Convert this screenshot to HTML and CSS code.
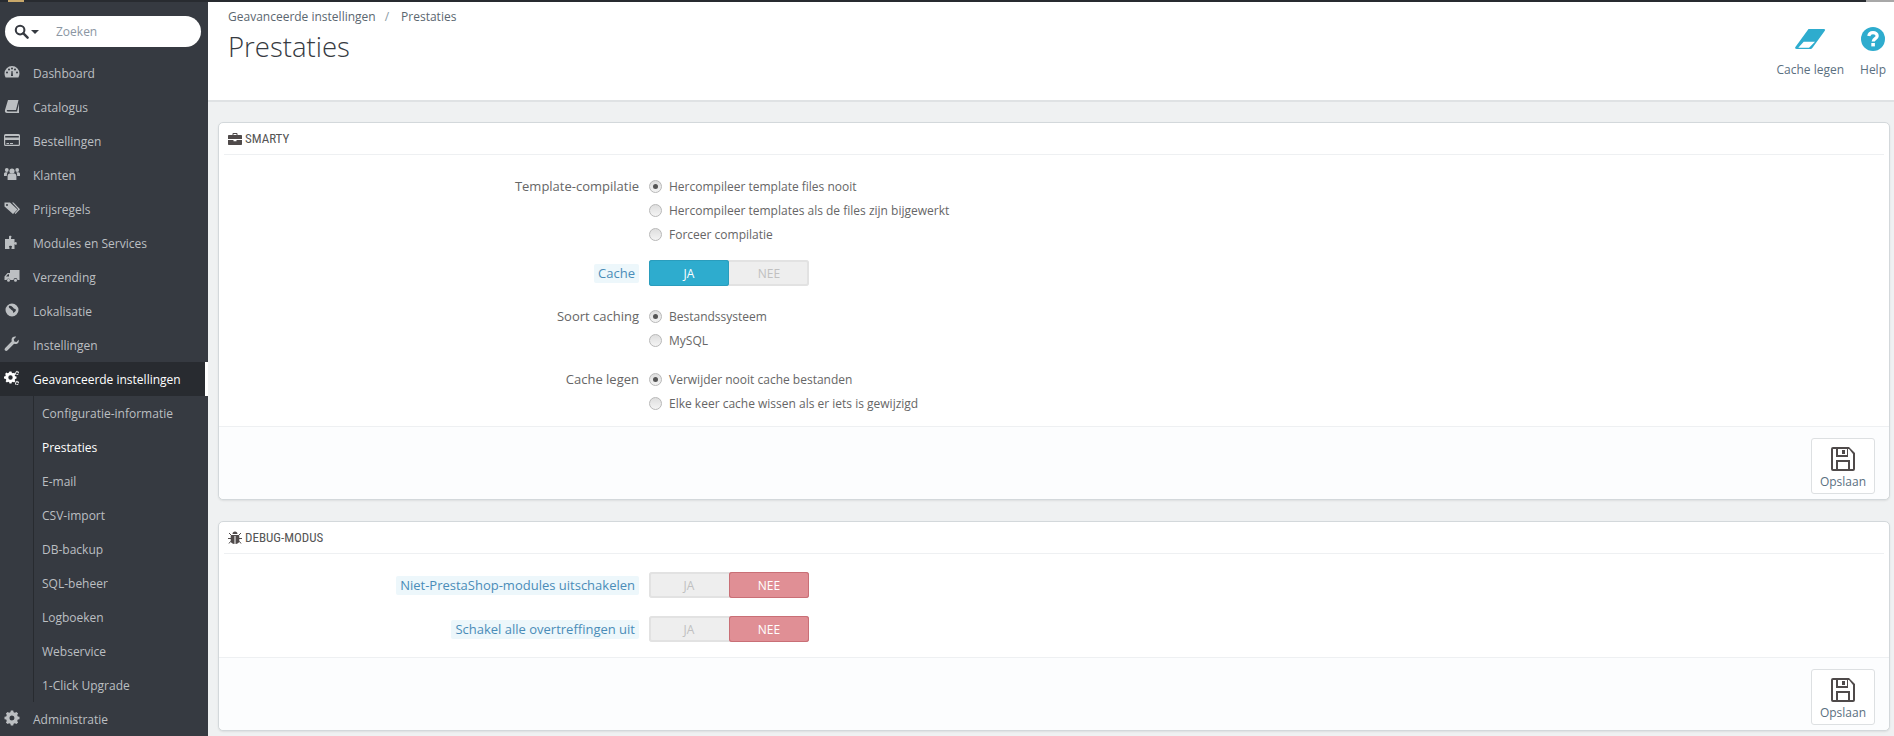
FILE: index.html
```html
<!DOCTYPE html>
<html lang="nl">
<head>
<meta charset="utf-8">
<title>Prestaties</title>
<link rel="stylesheet" href="styles.css">
</head>
<body>
<svg class="defs" width="0" height="0" aria-hidden="true">
  <symbol id="i-disk" viewBox="0 0 24 24"><path fill="#4f4a4a" fill-rule="evenodd" d="M2 0h16l6 6v16a2 2 0 0 1-2 2H2a2 2 0 0 1-2-2V2a2 2 0 0 1 2-2zm5 2v6h9V2zm4 1h3v4h-3zM2 2v20h3v-9h14v9h3V7l-4-5h-1v8H5V2zm5 13v7h10v-7z"/></symbol>
</svg>
<div class="topbar"><span class="logo-tip"></span><span class="grow"></span><span class="scroll-tip"></span></div>
<div class="layout">
  <nav class="sidebar">
    <div class="search">
      <svg class="search-icon" viewBox="0 0 16 16"><circle cx="6.5" cy="6.5" r="4.6" fill="none" stroke="#363a41" stroke-width="2.2"/><path d="M10 10l4.500 4.500" stroke="#363a41" stroke-width="2.6" stroke-linecap="round"/></svg>
      <span class="caret"></span>
      <span class="search-text">Zoeken</span>
    </div>
    <ul class="menu">
      <li class="item"><svg class="ico" viewBox="0 0 16 16"><path fill-rule="evenodd" d="M8 2a7.500 7.500 0 0 0-7.500 7.500c0 1.500.4 2.800 1.100 4h12.800c.7-1.200 1.100-2.500 1.100-4A7.500 7.500 0 0 0 8 2zM3 9.500a1 1 0 1 1 0-2 1 1 0 0 1 0 2zm2-3a1 1 0 1 1 0-2 1 1 0 0 1 0 2zm3-1a1 1 0 1 1 0-2 1 1 0 0 1 0 2zm3 1a1 1 0 1 1 0-2 1 1 0 0 1 0 2zm2 3a1 1 0 1 1 0-2 1 1 0 0 1 0 2zM7 12l.5-5h1l.5 5z"/></svg>Dashboard</li>
      <li class="item"><svg class="ico" viewBox="0 0 16 16"><path d="M4 2h10.500l-2.500 10H3.500c-.6 0-1 .7-.6 1.100.2.300.5.400.8.400h9.300l2-8v9.500H3c-1.500 0-2.500-1.200-2-3z"/></svg>Catalogus</li>
      <li class="item"><svg class="ico" viewBox="0 0 16 16"><path fill-rule="evenodd" d="M1.500 2h13A1.500 1.500 0 0 1 16 3.500v9a1.500 1.500 0 0 1-1.500 1.500h-13A1.500 1.500 0 0 1 0 12.500v-9A1.500 1.500 0 0 1 1.500 2zM1.200 4v1.500h13.600V4zm0 4v4.800h13.600V8zM2.500 11h2.500v1H2.500zm3.500 0h3v1H6z"/></svg>Bestellingen</li>
      <li class="item"><svg class="ico" viewBox="0 0 16 16"><circle cx="8" cy="5" r="2.600"/><circle cx="2.800" cy="4" r="1.900"/><circle cx="13.200" cy="4" r="1.900"/><path d="M3.600 14V10c0-1.500 1-2.500 2-2.500h4.800c1 0 2 1 2 2.500v4zM0 10V8c0-1 .7-1.800 1.500-1.800h2.200C3 7.200 2.800 8.500 2.800 10zm16 0V8c0-1-.7-1.800-1.500-1.800h-2.200c.7 1 .9 2.300.9 3.800z"/></svg>Klanten</li>
      <li class="item"><svg class="ico" viewBox="0 0 16 16"><path fill-rule="evenodd" d="M.5 2.500h5.500l7.500 7-4.500 4.500-8.500-7.500zM3 4a1 1 0 1 0 0 2 1 1 0 0 0 0-2z"/><path d="M8 2.500h1.500l6.500 6.800-4.500 4.700-.8-.7 3.500-4z"/></svg>Prijsregels</li>
      <li class="item"><svg class="ico" viewBox="0 0 16 16"><path d="M5 2.500c0-1 2.500-1 2.500 0 0 .8-.5 1-.5 1.500v1h3.500v3.500c.5 0 .8-.6 1.500-.6 1 0 1 3 0 3-.7 0-1-.6-1.500-.6V15H7.500v-1c0-.6.500-.8.500-1.500 0-1-3-1-3 0 0 .7.500.9.500 1.500v1H1V5h4V4c0-.5 0-.8 0-1.500z"/></svg>Modules en Services</li>
      <li class="item"><svg class="ico" viewBox="0 0 16 16"><path fill-rule="evenodd" d="M6 2h9.500v10h-2a2 2 0 0 0-4 0H6.400a2 2 0 0 0-3.900 0H.5V8.500L3.500 5H6zM4 6.200L2 8.500h3V6.200zM4.500 10.700a1.500 1.500 0 1 1 0 3 1.500 1.500 0 0 1 0-3zm7 0a1.500 1.500 0 1 1 0 3 1.500 1.500 0 0 1 0-3z"/></svg>Verzending</li>
      <li class="item"><svg class="ico" viewBox="0 0 16 16"><path fill-rule="evenodd" d="M8 1.500a6.500 6.500 0 1 1 0 13 6.500 6.500 0 0 1 0-13zM5 4c-.5 1 0 2 1 2.500s1 1.500 2 1.800c1 .3 1 1.500 1.300 2.700 1.500-.7 2.700-2 2.700-3.500-1-.2-1.300-1-2-1s-.5-1-1.500-1.500C7.500 4 6 3.500 5 4z"/></svg>Lokalisatie</li>
      <li class="item"><svg class="ico" viewBox="0 0 16 16"><path d="M14.800 3.500l-2.300 2.400-2.200-.5-.5-2.200L12.200.8C10.500.2 8.300 1 7.700 2.700c-.3.900-.2 1.800.1 2.600L1.200 11.900c-.8.900-.8 1.900-.1 2.500.7.700 1.700.6 2.500-.1l6.500-6.600c1.800.7 3.800 0 4.500-1.800.3-.8.300-1.700 0-2.400z"/></svg>Instellingen</li>
      <li class="item item-active"><svg class="ico" viewBox="0 0 16 16"><path fill-rule="evenodd" d="M5.500 3h2l.3 1.300 1.100.5 1.200-.6 1.300 1.300-.7 1.200.5 1.100 1.300.3v2l-1.300.3-.5 1.100.7 1.200-1.300 1.300-1.200-.7-1.100.5-.3 1.200h-2l-.3-1.200-1.100-.5-1.200.7-1.300-1.300.7-1.200-.5-1.100L0 10V8l1.300-.3.500-1.100-.7-1.200 1.300-1.300 1.200.6 1.100-.5zM6.500 6.800a2.200 2.200 0 1 0 0 4.400 2.200 2.200 0 0 0 0-4.400z" transform="translate(0 -1.500)"/><path fill-rule="evenodd" d="M13 .5l.5 1 1.100.1.300 1.100-.8.800.3 1.100-1 .5-.9-.6-1 .3-.6-1 .6-.8-.2-1.100 1-.5zM13 2.200a1 1 0 1 0 0 2 1 1 0 0 0 0-2zM13 10.500l.5 1 1.100.1.300 1.100-.8.800.3 1.100-1 .5-.9-.6-1 .3-.6-1 .6-.8-.2-1.100 1-.5zM13 12.200a1 1 0 1 0 0 2 1 1 0 0 0 0-2z"/></svg>Geavanceerde instellingen</li>
      <li class="submenu">
        <ul class="sub-list">
          <li class="sub">Configuratie-informatie</li>
          <li class="sub sub-active">Prestaties</li>
          <li class="sub">E-mail</li>
          <li class="sub">CSV-import</li>
          <li class="sub">DB-backup</li>
          <li class="sub">SQL-beheer</li>
          <li class="sub">Logboeken</li>
          <li class="sub">Webservice</li>
          <li class="sub">1-Click Upgrade</li>
        </ul>
      </li>
      <li class="item"><svg class="ico" viewBox="0 0 16 16"><path fill-rule="evenodd" d="M6.800 1.500h2.400l.4 1.700 1.300.6 1.500-.9 1.700 1.700-.9 1.500.6 1.300 1.700.4v2.400l-1.700.4-.6 1.300.9 1.500-1.700 1.700-1.500-.9-1.300.6-.4 1.700H6.800l-.4-1.700-1.300-.6-1.500.9-1.700-1.700.9-1.500-.6-1.300-1.700-.4V7.800l1.700-.4.6-1.300-.9-1.500 1.700-1.700 1.500.9 1.300-.6zM8 6.500a2.500 2.500 0 1 0 0 5 2.500 2.500 0 0 0 0-5z" transform="translate(0 -1)"/></svg>Administratie</li>
    </ul>
  </nav>
  <main class="main">
    <header class="page-head">
      <div class="head-left">
        <div class="crumbs"><span>Geavanceerde instellingen</span><span class="crumb-sep">/</span><span>Prestaties</span></div>
        <h1 class="title">Prestaties</h1>
      </div>
      <div class="head-actions">
        <div class="action action-cache">
          <svg class="action-icon" width="32" height="24" viewBox="0 0 32 24"><path fill="#2eacce" fill-rule="evenodd" d="M14.500 2H29.800c1.300 0 1.700.8 1 1.800L18.500 20.800c-.6.900-1.300 1.200-2.300 1.200H2.800c-1.700 0-2.200-1.100-1.200-2.300zM9.700 14.700L4.300 20.700H15l6-6z"/></svg>
          <span>Cache legen</span>
        </div>
        <div class="action action-help">
          <svg class="action-icon" width="24" height="24" viewBox="0 0 24 24"><circle cx="12" cy="12" r="12" fill="#2eacce"/><path fill="none" stroke="#fff" stroke-width="3.200" d="M7.800 9c.3-2.200 2-3.400 4.200-3.400 2.400 0 4.200 1.300 4.200 3.300 0 2.700-4 2.700-4 5.600"/><rect x="10.300" y="16" width="3.600" height="3.400" fill="#fff"/></svg>
          <span>Help</span>
        </div>
      </div>
    </header>
    <div class="content">
      <section class="panel panel-smarty">
        <div class="panel-head">
          <svg class="head-icon" width="14" height="12" viewBox="0 0 14 12"><path fill="#4f4a4a" fill-rule="evenodd" d="M4.500 2V1c0-.5.400-1 1-1h3c.6 0 1 .5 1 1v1H13c.6 0 1 .4 1 1v3H0V3c0-.6.400-1 1-1zm1 0h3V1h-3zM0 7h5.500v1.200h3V7H14v4c0 .6-.4 1-1 1H1c-.6 0-1-.4-1-1z"/></svg>
          <span>SMARTY</span>
        </div>
        <div class="panel-body body-smarty">
          <div class="row row-radios">
            <div class="label"><span>Template-compilatie</span></div>
            <div class="radios">
              <div class="radio"><i class="dot on"></i>Hercompileer template files nooit</div>
              <div class="radio"><i class="dot"></i>Hercompileer templates als de files zijn bijgewerkt</div>
              <div class="radio"><i class="dot"></i>Forceer compilatie</div>
            </div>
          </div>
          <div class="row row-switch">
            <div class="label"><span class="hint">Cache</span></div>
            <div class="switch"><span class="seg seg-yes">JA</span><span class="seg">NEE</span></div>
          </div>
          <div class="row row-radios row-wide">
            <div class="label"><span>Soort caching</span></div>
            <div class="radios">
              <div class="radio"><i class="dot on"></i>Bestandssysteem</div>
              <div class="radio"><i class="dot"></i>MySQL</div>
            </div>
          </div>
          <div class="row row-radios">
            <div class="label"><span>Cache legen</span></div>
            <div class="radios">
              <div class="radio"><i class="dot on"></i>Verwijder nooit cache bestanden</div>
              <div class="radio"><i class="dot"></i>Elke keer cache wissen als er iets is gewijzigd</div>
            </div>
          </div>
        </div>
        <div class="panel-foot">
          <button class="save" type="button"><svg width="24" height="24"><use href="#i-disk"/></svg><span>Opslaan</span></button>
        </div>
      </section>
      <section class="panel panel-debug">
        <div class="panel-head">
          <svg class="head-icon" width="14" height="13" viewBox="0 0 14 13"><path fill="#4f4a4a" d="M4.500 3C4.500 1.500 5.500.5 7 .5s2.500 1 2.500 2.500zM3.500 4h7c.5 0 .8.400.8.900V10c0 1.600-1.600 3-3.800 3V5h-1v8c-2.200 0-3.800-1.400-3.800-3V4.900c0-.5.300-.9.800-.9z"/><path stroke="#4f4a4a" fill="none" d="M1 2l2.500 2.500M13 2l-2.500 2.500M0 7.500h3M11 7.500h3M.7 12.500l2.600-2.500M13.300 12.500L10.700 10"/></svg>
          <span>DEBUG-MODUS</span>
        </div>
        <div class="panel-body body-debug">
          <div class="row row-switch">
            <div class="label"><span class="hint">Niet-PrestaShop-modules uitschakelen</span></div>
            <div class="switch"><span class="seg">JA</span><span class="seg seg-no">NEE</span></div>
          </div>
          <div class="row row-switch">
            <div class="label"><span class="hint">Schakel alle overtreffingen uit</span></div>
            <div class="switch"><span class="seg">JA</span><span class="seg seg-no">NEE</span></div>
          </div>
        </div>
        <div class="panel-foot">
          <button class="save" type="button"><svg width="24" height="24"><use href="#i-disk"/></svg><span>Opslaan</span></button>
        </div>
      </section>
    </div>
  </main>
</div>
</body>
</html>
```

FILE: styles.css
```css
* { box-sizing: border-box; }
html, body { margin: 0; padding: 0; height: 736px; overflow: hidden; }
body { font-family: "Open Sans", "Liberation Sans", sans-serif; font-size: 12px; color: #555; background: #eff1f2; }
ul { list-style: none; margin: 0; padding: 0; }
.defs { position: absolute; }

.topbar { display: flex; height: 2px; background: #282b30; }
.logo-tip { width: 16px; margin-left: 8px; background: #c9a86a; }
.grow { flex: 1; }
.scroll-tip { width: 28px; background: #a8a8a8; }

.layout { display: flex; height: 734px; }

.sidebar { width: 208px; flex: none; background: #363a41; padding-top: 14px; color: #bcbfc2; }
.search { display: flex; align-items: center; height: 31px; margin: 0 7px 0 5px; background: #fff; border-radius: 16px; padding-left: 9px; }
.search-icon { width: 15px; height: 15px; }
.caret { width: 0; height: 0; margin-left: 2px; border: 4px solid transparent; border-top: 4px solid #363a41; border-bottom: 0; }
.search-text { margin-left: 17px; color: #8b96a3; }
.menu { margin-top: 9px; }
.item { display: flex; align-items: center; height: 34px; padding-left: 4px; }
.ico { width: 16px; height: 16px; margin-right: 13px; fill: #bcbfc2; flex: none; position: relative; top: -1px; }
.item-active { background: #282b30; color: #fff; border-right: 3px solid #fff; }
.item-active .ico { fill: #fff; }
.sub-list { margin-left: 33px; border-left: 1px solid #282b30; padding-left: 8px; }
.sub { display: flex; align-items: center; height: 34px; }
.sub-active { color: #fff; }

.main { flex: 1; min-width: 0; display: flex; flex-direction: column; }
.page-head { display: flex; justify-content: space-between; height: 100px; background: #fff; border-bottom: 2px solid #dfe2e4; padding: 0 8px 0 20px; color: #363a41; }
.crumbs { display: flex; gap: 9px; height: 28px; align-items: center; color: #5b6770; }
.crumb-sep { color: #8a9aa3; margin-right: 3px; }
.title { margin: 0; font-size: 27.5px; font-weight: 300; line-height: 34px; color: #363a41; }
.head-actions { display: flex; gap: 16px; padding-top: 25px; }
.action { display: flex; flex-direction: column; align-items: center; color: #5a7080; }
.action-icon { display: block; height: 24px; margin-bottom: 10px; }

.content { flex: 1; padding: 20px 4px 0 10px; overflow: hidden; }
.panel { background: #fff; border: 1px solid #d3d8db; border-radius: 5px; box-shadow: 0 1px 2px rgba(0,0,0,.08); padding: 0; }
.panel-smarty { height: 378px; margin-bottom: 21px; }
.panel-debug { height: 210px; }
.panel-head { display: flex; align-items: center; height: 32px; margin: 0 5px; padding-left: 4px; border-bottom: 1px solid #eef0f2; color: #555; font-family: "Liberation Sans Narrow", "Roboto Condensed", Roboto, sans-serif; font-size: 13px; font-weight: 400; }
.head-icon { margin-right: 3px; flex: none; }
.body-smarty { height: 271px; padding-top: 19px; }
.body-debug { height: 103px; padding-top: 18px; }
.row { display: grid; grid-template-columns: 420px 1fr; column-gap: 10px; }
.row-radios { margin-bottom: 14px; }
.row-wide { margin-bottom: 15px; }
.row-switch { margin-bottom: 18px; }
.label { text-align: right; height: 24px; line-height: 24px; font-size: 13px; color: #666; }
.row-switch .label { height: 26px; line-height: 26px; }
.hint { display: inline-block; line-height: 19px; padding: 0 4px; background: #edf7fb; color: #4a8cb8; border-radius: 2px; }
.radio { display: flex; align-items: center; height: 24px; color: #666; }
.dot { width: 13px; height: 13px; margin-right: 7px; border-radius: 50%; border: 1px solid #b8b8b8; background: linear-gradient(#dedede, #f4f4f4); flex: none; display: flex; align-items: center; justify-content: center; }
.dot.on::after { content: ""; width: 5px; height: 5px; border-radius: 50%; background: #555; }
.switch { display: flex; width: 160px; height: 26px; border-radius: 3px; background: #eee; box-shadow: inset 0 0 0 2px #e2e2e2; }
.seg { width: 80px; display: flex; align-items: center; justify-content: center; color: #c0c0c0; border-radius: 3px; }
.seg-yes { background: #2eacce; color: #fff; box-shadow: inset 0 0 0 1px #2a9dbd; }
.seg-no { background: #e08f95; color: #fff; box-shadow: inset 0 0 0 1px #c96f76; }
.panel-foot { display: flex; justify-content: flex-end; align-items: flex-start; height: 73px; border-top: 1px solid #eef0f2; background: #fcfdfe; padding: 11px 14px 0 0; border-radius: 0 0 5px 5px; }
.save { display: flex; flex-direction: column; align-items: center; justify-content: flex-start; gap: 2px; width: 64px; height: 56px; padding: 8px 0 0; background: #fff; border: 1px solid #dde0e2; border-radius: 3px; font: inherit; color: #5a7080; }
```
